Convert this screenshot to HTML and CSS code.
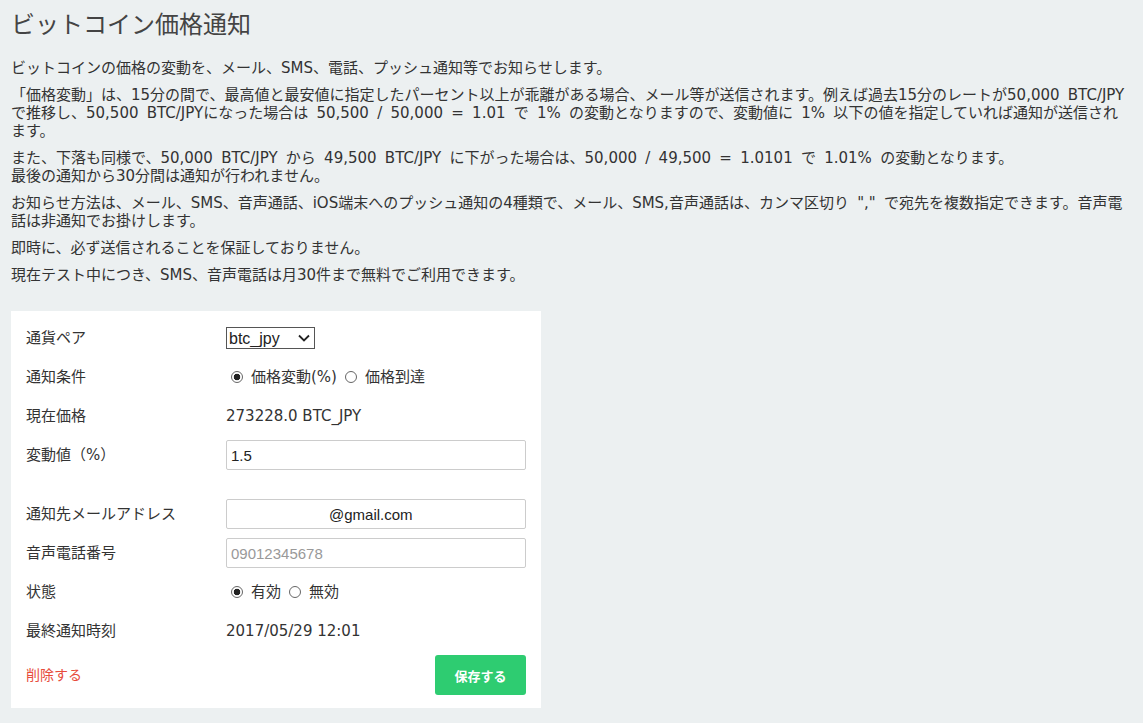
FILE: index.html
```html
<!DOCTYPE html>
<html lang="ja">
<head>
    <meta charset="UTF-8">
    <meta name="viewport" content="width=device-width, initial-scale=1.0">
    <title>ビットコイン価格通知</title>
    <link rel="stylesheet" href="styles.css">
</head>
<body>
    <h1 class="title">ビットコイン価格通知</h1>
    <div class="notes">
        <p>ビットコインの価格の変動を、メール、SMS、電話、プッシュ通知等でお知らせします。</p>
        <p>「価格変動」は、15分の間で、最高値と最安値に指定したパーセント以上が乖離がある場合、メール等が送信されます。例えば過去15分のレートが50,000 BTC/JPYで推移し、50,500 BTC/JPYになった場合は 50,500 / 50,000 = 1.01 で 1% の変動となりますので、変動値に 1% 以下の値を指定していれば通知が送信されます。</p>
        <p>また、下落も同様で、50,000 BTC/JPY から 49,500 BTC/JPY に下がった場合は、50,000 / 49,500 = 1.0101 で 1.01% の変動となります。<br>最後の通知から30分間は通知が行われません。</p>
        <p>お知らせ方法は、メール、SMS、音声通話、iOS端末へのプッシュ通知の4種類で、メール、SMS,音声通話は、カンマ区切り "," で宛先を複数指定できます。音声電話は非通知でお掛けします。</p>
        <p>即時に、必ず送信されることを保証しておりません。</p>
        <p>現在テスト中につき、SMS、音声電話は月30件まで無料でご利用できます。</p>
    </div>

    <form class="card">
        <div class="row">
            <label class="label">通貨ペア</label>
            <div class="field">
                <span class="select-wrap">
                    <select class="select">
                        <option selected>btc_jpy</option>
                        <option>eth_btc</option>
                    </select>
                    <svg class="chevron" width="12" height="8" viewBox="0 0 12 8"><path d="M1 1.5 L6 6.5 L11 1.5" fill="none" stroke="#222" stroke-width="1.8"/></svg>
                </span>
            </div>
        </div>
        <div class="row">
            <label class="label">通知条件</label>
            <div class="field radios">
                <label class="radio"><input type="radio" name="cond" checked>価格変動(%)</label>
                <label class="radio"><input type="radio" name="cond">価格到達</label>
            </div>
        </div>
        <div class="row">
            <label class="label">現在価格</label>
            <div class="field">273228.0 BTC_JPY</div>
        </div>
        <div class="row">
            <label class="label">変動値（%）</label>
            <div class="field"><input class="text-input" type="text" value="1.5"></div>
        </div>
        <div class="row spaced">
            <label class="label">通知先メールアドレス</label>
            <div class="field"><input class="text-input masked" type="text" value="@gmail.com"></div>
        </div>
        <div class="row">
            <label class="label">音声電話番号</label>
            <div class="field"><input class="text-input" type="text" placeholder="09012345678"></div>
        </div>
        <div class="row">
            <label class="label">状態</label>
            <div class="field radios">
                <label class="radio"><input type="radio" name="state" checked>有効</label>
                <label class="radio"><input type="radio" name="state">無効</label>
            </div>
        </div>
        <div class="row">
            <label class="label">最終通知時刻</label>
            <div class="field">2017/05/29 12:01</div>
        </div>
        <div class="actions">
            <a href="#" class="delete">削除する</a>
            <button type="button" class="save">保存する</button>
        </div>
    </form>
</body>
</html>
```

FILE: styles.css
```css
body {
    font-family: "DejaVu Sans", "Noto Sans CJK JP", sans-serif;
    font-size: 15px;
    line-height: 18px;
    color: #333;
    background-color: #ecf0f1;
    margin: 0;
    padding: 10px 11px;
}
.title {
    font-size: 24px;
    font-weight: normal;
    line-height: 30px;
    color: #444;
    margin: 0 0 19px;
}
.notes {
    word-spacing: 3.5px;
}
.notes p {
    margin: 0 0 9px;
}
.notes p:last-child {
    margin-bottom: 0;
}
.card {
    background: white;
    width: 530px;
    box-sizing: border-box;
    margin-top: 27px;
    padding: 12px 15px 13px;
}
.row {
    display: grid;
    grid-template-columns: 200px 300px;
    align-items: center;
    min-height: 30px;
    margin-bottom: 9px;
}
.row.spaced {
    margin-top: 29px;
}
.field {
    display: flex;
    align-items: center;
}
.select-wrap {
    position: relative;
    display: inline-block;
}
.select {
    -webkit-appearance: none;
    appearance: none;
    width: 89px;
    height: 22px;
    border: 1px solid #555;
    border-radius: 0;
    background: white;
    font-family: "Liberation Sans", Arial, sans-serif;
    font-size: 16px;
    color: #222;
    padding: 0 2px;
    margin: 0;
}
.chevron {
    position: absolute;
    right: 5px;
    top: 7px;
    pointer-events: none;
}
.radios {
    gap: 8px;
}
.radio {
    display: flex;
    align-items: center;
    gap: 8px;
}
.radios .radio:first-child {
    margin-left: 5px;
}
.radio input {
    -webkit-appearance: none;
    appearance: none;
    width: 12px;
    height: 12px;
    margin: 0;
    border: 1px solid #666;
    border-radius: 50%;
    background: white;
}
.radio input:checked {
    background: radial-gradient(circle, #222 0 3px, white 3.6px);
}
.text-input {
    width: 300px;
    height: 30px;
    box-sizing: border-box;
    border: 1px solid #ccc;
    border-radius: 2px;
    padding: 0 4px;
    font-family: "Liberation Sans", Arial, sans-serif;
    font-size: 15px;
    color: #222;
    margin: 0;
}
.text-input::placeholder {
    color: #999;
}
.text-input.masked {
    text-indent: 98px;
}
.actions {
    display: flex;
    justify-content: space-between;
    align-items: center;
}
.delete {
    color: #e74c3c;
    text-decoration: none;
    font-size: 14px;
}
.save {
    width: 91px;
    height: 40px;
    background: #2ecc71;
    color: white;
    border: none;
    border-radius: 3px;
    font-family: "Noto Sans CJK JP", sans-serif;
    font-size: 13px;
    font-weight: bold;
    cursor: pointer;
}
```
